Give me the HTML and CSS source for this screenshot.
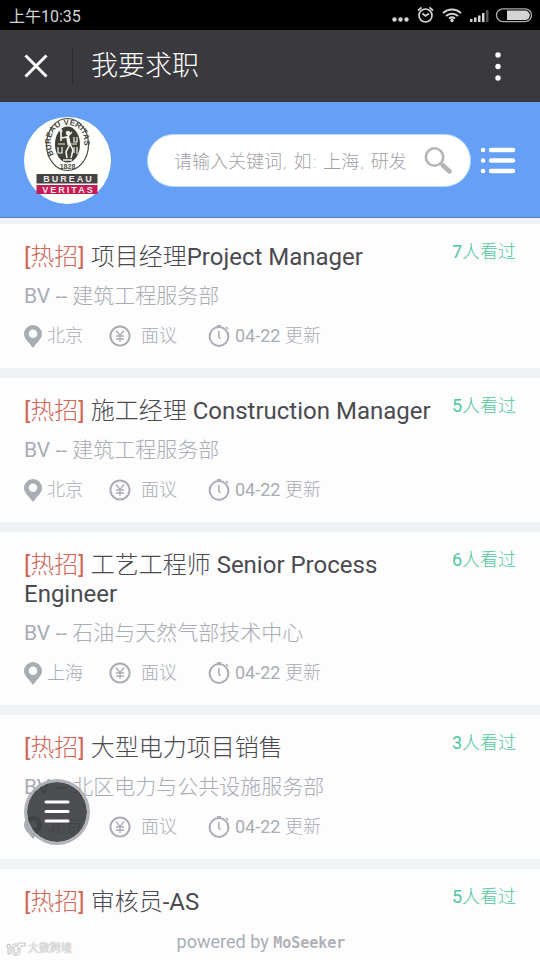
FILE: index.html
```
<!DOCTYPE html>
<html lang="zh-CN">
<head>
    <meta charset="UTF-8">
    <meta name="viewport" content="width=device-width, initial-scale=1.0">
    <title>我要求职</title>
    <link rel="stylesheet" href="styles.css">
</head>
<body>
    <!-- shared icons -->
    <svg class="sprite" width="0" height="0">
        <symbol id="pin" viewBox="0 0 18 23">
            <path fill="currentColor" fill-rule="evenodd" d="M9 0a9 9 0 0 0-9 9c0 5 5 8 9 14 4-6 9-9 9-14a9 9 0 0 0-9-9zm0 4.500a4.300 4.300 0 1 1 0 8.600a4.300 4.300 0 0 1 0-8.600z"/>
        </symbol>
        <symbol id="yen" viewBox="0 0 22 22">
            <g fill="none" stroke="currentColor">
                <circle cx="11" cy="11" r="9.6" stroke-width="2"/>
                <path stroke-width="1.3" d="M7 5.500l4 5 4-5M11 10.500V17M7 11h8M7 14h8"/>
            </g>
        </symbol>
        <symbol id="clock" viewBox="0 0 22 22">
            <g fill="none" stroke="currentColor">
                <circle cx="11" cy="11.500" r="9.4" stroke-width="2"/>
                <path stroke-width="1.5" d="M9 .8h4M18 2l2 2M10.800 6v6l1.800 1.800"/>
            </g>
        </symbol>
    </svg>

    <div class="app">
        <div class="statusbar">
            <span class="time">上午10:35</span>
            <svg width="142" height="20" viewBox="0 0 142 20">
                <g fill="#d4d4d4">
                    <circle cx="4.500" cy="14.500" r="2.200"/>
                    <circle cx="10.500" cy="14.500" r="2.200"/>
                    <circle cx="16.500" cy="14.500" r="2.200"/>
                    <circle cx="62" cy="15.500" r="1.700"/>
                    <path d="M80 14h2.500v3H80zM84 12.500h2.500V17H84zM88 10.500h2.500V17H88zM92 8h2.500v9H92z"/>
                    <path fill="#555" d="M96 5h2.500v12H96z"/>
                    <path d="M117 5.500h18a4.800 4.800 0 0 1 0 9.600h-18z"/>
                </g>
                <g fill="none" stroke="#d4d4d4" stroke-width="1.700">
                    <circle cx="35.500" cy="10.500" r="6.500"/>
                    <path d="M32.500 8.500l3 2.500 3.500-2.500M28 5.500l3.500-3.200M43 5.500l-3.500-3.200"/>
                    <path stroke-width="2" d="M53 8a13 13 0 0 1 18 0M56 11a9 9 0 0 1 12 0M59 13.500a5 5 0 0 1 6 0"/>
                    <rect x="106.500" y="3.900" width="35" height="12.800" rx="6.400" stroke="#aaa" stroke-width="1.300"/>
                </g>
            </svg>
        </div>

        <div class="titlebar">
            <button class="close" aria-label="关闭">
                <svg width="24" height="24" viewBox="0 0 24 24"><path d="M1.500 1.500l21 21M22.500 1.500l-21 21" stroke="#fff" stroke-width="3"/></svg>
            </button>
            <h1>我要求职</h1>
            <button class="more" aria-label="更多">
                <svg width="6" height="30" viewBox="0 0 6 30" fill="#fff"><circle cx="3" cy="4" r="2.700"/><circle cx="3" cy="15.500" r="2.700"/><circle cx="3" cy="27" r="2.700"/></svg>
            </button>
        </div>

        <div class="header">
            <svg class="logo" width="88" height="88" viewBox="0 0 88 88">
                <circle cx="43.500" cy="43.500" r="43.500" fill="#fffffb"/>
                <ellipse cx="43.500" cy="27.500" rx="21" ry="26" fill="none" stroke="#4a4a44" stroke-width="1.200"/>
                <ellipse cx="43.500" cy="27.500" rx="12.500" ry="18" fill="#3f403a"/>
                <path id="ring" fill="none" d="M30 38C23.500 26 26 8.500 43.500 8C61 8.500 63.500 26 57 38"/>
                <text class="ring-text"><textPath href="#ring">BUREAU VERITAS</textPath></text>
                <text class="year-text" x="43.500" y="51.800">1828</text>
                <g fill="none" stroke="#f4f4ee" stroke-width="1.600">
                    <path d="M37 12v12M35.500 14h3M37 21l6-1 5-5M44 19l2 8-4 8 1 6M46 27l3 6-2 8M39 43h9"/>
                    <path d="M34 27h7M47 27h6M34 30v6h4v-6M50 20v5h3v-5M50 30v6M53 30v7" stroke-width="1.200"/>
                </g>
                <path fill="none" stroke="#f4f4ee" stroke-width="3" d="M43.500 19l1.500 9"/>
                <circle cx="44" cy="16" r="2.200" fill="#f4f4ee"/>
                <path fill="#444" d="M12.500 57h61v9.500h-61z"/>
                <path fill="#c41c55" d="M12.500 68h61v9h-61z"/>
                <text class="bar-text" x="44.500" y="65">BUREAU</text>
                <text class="bar-text" x="44.500" y="75.800">VERITAS</text>
            </svg>
            <form class="search">
                <input type="text" aria-label="搜索职位" placeholder="请输入关键词, 如: 上海, 研发">
                <button type="button" aria-label="搜索">
                    <svg width="28" height="28" viewBox="0 0 28 28" fill="none" stroke="#b4b4b4"><circle cx="10.500" cy="10" r="8.700" stroke-width="2.600"/><path d="M16.500 16.500l3 3" stroke-width="2"/><path d="M19 18.500l6.500 6" stroke-width="4.500" stroke-linecap="round"/></svg>
                </button>
            </form>
            <button class="listbtn" aria-label="列表">
                <svg width="36" height="28" viewBox="0 0 36 28" stroke="#fff" stroke-width="4.500" stroke-linecap="round"><path d="M3 3h.1M3 13.500h.1M3 24h.1M11 3h22M11 13.500h22M11 24h22"/></svg>
            </button>
        </div>

        <div class="jobs">
            <div class="card">
                <div class="top">
                    <h2><span class="hot">[热招]</span> 项目经理Project Manager</h2>
                    <span class="views">7人看过</span>
                </div>
                <p class="dept">BV -- 建筑工程服务部</p>
                <div class="meta">
                    <span class="city"><svg class="pin"><use href="#pin"/></svg>北京</span>
                    <span class="pay"><svg class="icon"><use href="#yen"/></svg>面议</span>
                    <span class="date"><svg class="icon"><use href="#clock"/></svg>04-22 更新</span>
                </div>
            </div>
            <div class="card">
                <div class="top">
                    <h2><span class="hot">[热招]</span> 施工经理 Construction Manager</h2>
                    <span class="views">5人看过</span>
                </div>
                <p class="dept">BV -- 建筑工程服务部</p>
                <div class="meta">
                    <span class="city"><svg class="pin"><use href="#pin"/></svg>北京</span>
                    <span class="pay"><svg class="icon"><use href="#yen"/></svg>面议</span>
                    <span class="date"><svg class="icon"><use href="#clock"/></svg>04-22 更新</span>
                </div>
            </div>
            <div class="card">
                <div class="top">
                    <h2><span class="hot">[热招]</span> 工艺工程师 Senior Process Engineer</h2>
                    <span class="views">6人看过</span>
                </div>
                <p class="dept">BV -- 石油与天然气部技术中心</p>
                <div class="meta">
                    <span class="city"><svg class="pin"><use href="#pin"/></svg>上海</span>
                    <span class="pay"><svg class="icon"><use href="#yen"/></svg>面议</span>
                    <span class="date"><svg class="icon"><use href="#clock"/></svg>04-22 更新</span>
                </div>
            </div>
            <div class="card">
                <div class="top">
                    <h2><span class="hot">[热招]</span> 大型电力项目销售</h2>
                    <span class="views">3人看过</span>
                </div>
                <p class="dept">BV -- 北区电力与公共设施服务部</p>
                <div class="meta">
                    <span class="city"><svg class="pin"><use href="#pin"/></svg>北京</span>
                    <span class="pay"><svg class="icon"><use href="#yen"/></svg>面议</span>
                    <span class="date"><svg class="icon"><use href="#clock"/></svg>04-22 更新</span>
                </div>
            </div>
            <div class="card">
                <div class="top">
                    <h2><span class="hot">[热招]</span> 审核员-AS</h2>
                    <span class="views">5人看过</span>
                </div>
            </div>
        </div>

        <div class="footer">powered by <span class="brand">MoSeeker</span></div>

        <button class="fab" aria-label="菜单">
            <svg width="26" height="24" viewBox="0 0 26 24" stroke="#fff" stroke-width="3" stroke-linecap="round"><path d="M2 2h22M2 11.500h22M2 21h22"/></svg>
        </button>
        <div class="watermark">
            <svg width="20" height="14" viewBox="0 0 20 14" fill="none" stroke="#c0c0c0" stroke-width="1"><path d="M1 3l3-1v10H2V5H1zM6 4l2-2h4v2H9L8 5v5l1 1h2l1-1V6h2v5l-2 2H8l-2-2zM12 1h7v3h-5"/></svg>
            <span>大数跨境</span>
        </div>
    </div>
</body>
</html>
```
FILE: styles.css
```
* {
    box-sizing: border-box;
}
body {
    margin: 0;
    background-color: #fdfdfe;
    font-family: Roboto, "Noto Sans CJK SC Light", "Noto Sans CJK SC", sans-serif;
}
h1, h2, p {
    margin: 0;
    font-weight: 400;
}
button {
    display: flex;
    align-items: center;
    justify-content: center;
    padding: 0;
    border: none;
    background: none;
    cursor: pointer;
}
.sprite {
    position: absolute;
}
.app {
    position: relative;
    display: flex;
    flex-direction: column;
    height: 100vh;
    overflow: hidden;
}
.statusbar {
    display: flex;
    flex: none;
    align-items: center;
    justify-content: space-between;
    height: 30px;
    padding: 0 8px 0 9px;
    background-color: #000;
    color: #d4d4d4;
    font-family: Roboto, "Noto Sans CJK SC", sans-serif;
    font-size: 16px;
}
.titlebar {
    display: flex;
    flex: none;
    align-items: center;
    height: 72px;
    background-color: #39393e;
    color: #fff;
}
.titlebar .close {
    width: 73px;
    height: 36px;
    border-right: 1px solid #2c2c30;
}
.titlebar h1 {
    flex: 1;
    padding-left: 18px;
    font-size: 27px;
    line-height: 40px;
}
.titlebar .more {
    width: 84px;
    height: 40px;
}
.header {
    display: flex;
    flex: none;
    align-items: center;
    height: 116px;
    padding: 2px 24px 0;
    background-color: #659ff6;
    border-bottom: 1px solid #5584c4;
}
.logo {
    flex: none;
}
.ring-text,
.year-text,
.bar-text {
    font-family: "Liberation Sans", sans-serif;
    font-weight: 700;
}
.ring-text {
    fill: #4a4a44;
    font-size: 8px;
}
.year-text {
    fill: #4a4a44;
    font-size: 7px;
    text-anchor: middle;
}
.bar-text {
    fill: #f2e8ea;
    font-size: 9px;
    letter-spacing: 2px;
    text-anchor: middle;
}
.search {
    display: flex;
    flex: 1;
    align-items: center;
    height: 53px;
    margin: 0 9px 0 35px;
    padding: 0 18px 0 26px;
    background-color: #fff;
    border: 1px solid #b6dcfb;
    border-radius: 27px;
}
.search input {
    flex: 1;
    min-width: 0;
    padding: 2px 0 0;
    border: none;
    outline: none;
    background: none;
    font-family: "DejaVu Sans", "Noto Sans CJK SC", sans-serif;
    font-size: 18px;
    font-weight: 300;
}
.search input::placeholder {
    color: #9fa0a6;
    opacity: 1;
}
.jobs {
    flex: 1;
    min-height: 0;
    padding-top: 6px;
    overflow: hidden;
    background-color: #f0f3f6;
}
.card {
    padding: 19px 24px 20px;
    margin-bottom: 10px;
    background-color: #fdfdfe;
}
.card:last-child {
    height: 100%;
}
.top {
    display: flex;
    justify-content: space-between;
}
.top h2 {
    color: #4a4a4f;
    font-size: 24px;
    line-height: 29px;
}
.hot {
    color: #cf6657;
}
.views {
    flex: none;
    color: #50c79e;
    font-size: 18px;
    line-height: 18px;
}
.dept {
    margin-top: 12px;
    color: #a9acb3;
    font-size: 21px;
    line-height: 25px;
}
.meta {
    display: flex;
    margin-top: 15px;
    color: #a9acb3;
    font-size: 18px;
    line-height: 24px;
}
.meta span {
    display: flex;
    align-items: center;
}
.meta .city {
    gap: 5px;
    min-width: 85px;
}
.meta .pay {
    gap: 10px;
    min-width: 99px;
}
.meta .date {
    gap: 5px;
}
.pin {
    width: 18px;
    height: 23px;
}
.icon {
    width: 22px;
    height: 22px;
}
.footer {
    flex: none;
    height: 35px;
    padding-right: 18px;
    background-color: #fdfdfe;
    color: #a9adb8;
    font-size: 18px;
    line-height: 34px;
    text-align: center;
}
.brand {
    color: #b0b1b6;
    font-family: "DejaVu Sans Mono", monospace;
    font-size: 15px;
    font-weight: 700;
}
.fab {
    position: absolute;
    bottom: 115px;
    left: 24px;
    width: 66px;
    height: 66px;
    background-color: rgba(46, 47, 50, 0.85);
    background-clip: padding-box;
    border: 3px solid rgba(170, 171, 176, 0.9);
    border-radius: 50%;
}
.watermark {
    position: absolute;
    bottom: 3px;
    left: 6px;
    display: flex;
    align-items: center;
    gap: 2px;
    color: #fff;
    font-size: 11px;
    line-height: 16px;
    text-shadow: 0 0 1px #888, 0 0 1px #999;
}
```
